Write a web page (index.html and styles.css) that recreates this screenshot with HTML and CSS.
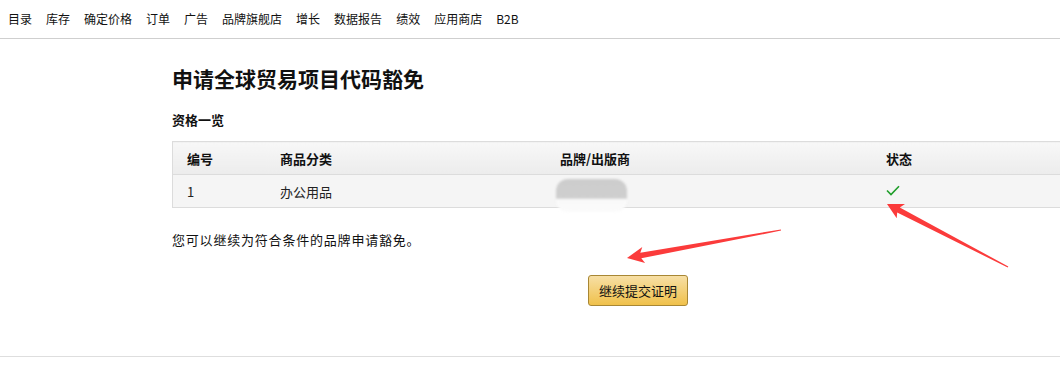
FILE: index.html
```html
<!DOCTYPE html>
<html lang="zh-CN">
<head>
<meta charset="utf-8">
<title>申请全球贸易项目代码豁免</title>
<link rel="stylesheet" href="styles.css">
</head>
<body>
<nav class="topnav">
  <a>目录</a><a>库存</a><a>确定价格</a><a>订单</a><a>广告</a><a>品牌旗舰店</a><a>增长</a><a>数据报告</a><a>绩效</a><a>应用商店</a><a>B2B</a>
</nav>
<main class="page">
  <h1 class="title">申请全球贸易项目代码豁免</h1>
  <h2 class="subtitle">资格一览</h2>
  <table class="grid">
    <thead>
      <tr><th class="c1">编号</th><th class="c2">商品分类</th><th class="c3">品牌/出版商</th><th class="c4">状态</th></tr>
    </thead>
    <tbody>
      <tr>
        <td>1</td>
        <td>办公用品</td>
        <td class="brand"><span class="redact"></span></td>
        <td><svg class="check" width="14" height="11" viewBox="0 0 14 11"><path d="M1 5.5 L5 9.5 L13 1.2" fill="none" stroke="#1f9e2a" stroke-width="1.6"/></svg></td>
      </tr>
    </tbody>
  </table>
  <p class="note">您可以继续为符合条件的品牌申请豁免。</p>
  <div class="actions"><button class="btn">继续提交证明</button></div>
</main>
<div class="footline"></div>
<svg class="arrows" width="1060" height="369" viewBox="0 0 1060 369">
  <polygon fill="#fb3b3b" points="627,258 642.3,247.1 640.3,252.7 780.9,229.4 781.1,230.6 641.3,258.3 645.1,262.9"/>
  <polygon fill="#fb3b3b" points="887,204 905,204 899.8,207.5 1008.3,266.5 1007.7,267.5 897.2,212.5 896.7,218.3"/>
</svg>
</body>
</html>
```

FILE: styles.css
```css
html, body {
  margin: 0;
  padding: 0;
  background: #fff;
  overflow: hidden;
}
body {
  position: relative;
  width: 1060px;
  height: 369px;
  font-family: "Noto Sans CJK SC", "Liberation Sans", sans-serif;
  color: #111;
}
.topnav {
  display: flex;
  align-items: center;
  height: 38px;
  border-bottom: 1px solid #cfcfcf;
  padding-left: 8px;
  gap: 14px;
  font-size: 12px;
  color: #111;
}
.topnav a {
  line-height: 38px;
  white-space: nowrap;
}
.page {
  margin-left: 172px;
  width: 900px;
}
.title {
  margin: 25px 0 0;
  font-size: 21px;
  line-height: 28px;
  font-weight: 700;
  color: #111;
}
.subtitle {
  margin: 19px 0 0;
  font-size: 13px;
  line-height: 18px;
  font-weight: 700;
}
.grid {
  margin-top: 12px;
  width: 900px;
  border-collapse: collapse;
  font-size: 13px;
  table-layout: fixed;
}
.grid th, .grid td {
  height: 32px;
  padding: 0 0 0 15px;
  text-align: left;
  border: 1px solid #dcdcdc;
  border-left: none;
  border-right: none;
}
.grid th:first-child, .grid td:first-child {
  border-left: 1px solid #dcdcdc;
  padding-left: 14px;
}
.grid th {
  font-weight: 700;
  background: linear-gradient(#f7f7f7, #ececec);
}
.grid td {
  background: #f5f5f5;
  color: #222;
}
.c1 { width: 78px; }
.c2 { width: 265px; }
.c3 { width: 311px; }
.brand { position: relative; }
.redact {
  position: absolute;
  left: 11px;
  top: 4px;
  width: 71px;
  height: 33px;
  border-radius: 12px;
  background: linear-gradient(#cdcdcd 0, #cfcfcf 58%, #f9f9f9 62%, #fbfbfb 100%);
  filter: blur(1px);
}
.check { display: block; margin-top: -1px; }
.note {
  margin: 23px 0 0;
  font-size: 13px;
  line-height: 18px;
  letter-spacing: 0.8px;
  color: #111;
}
.actions {
  margin: 26px 0 0 416px;
}
.btn {
  display: block;
  width: 100px;
  height: 31px;
  border: 1px solid #a88734;
  border-radius: 3px;
  background: linear-gradient(#f7dfa5, #f0c14b);
  font-family: "Noto Sans CJK SC", sans-serif;
  font-size: 13px;
  color: #111;
  padding: 0;
}
.footline {
  position: absolute;
  left: 0;
  top: 356px;
  width: 1060px;
  height: 1px;
  background: #dedede;
}
.arrows {
  position: absolute;
  left: 0;
  top: 0;
  pointer-events: none;
}
```
